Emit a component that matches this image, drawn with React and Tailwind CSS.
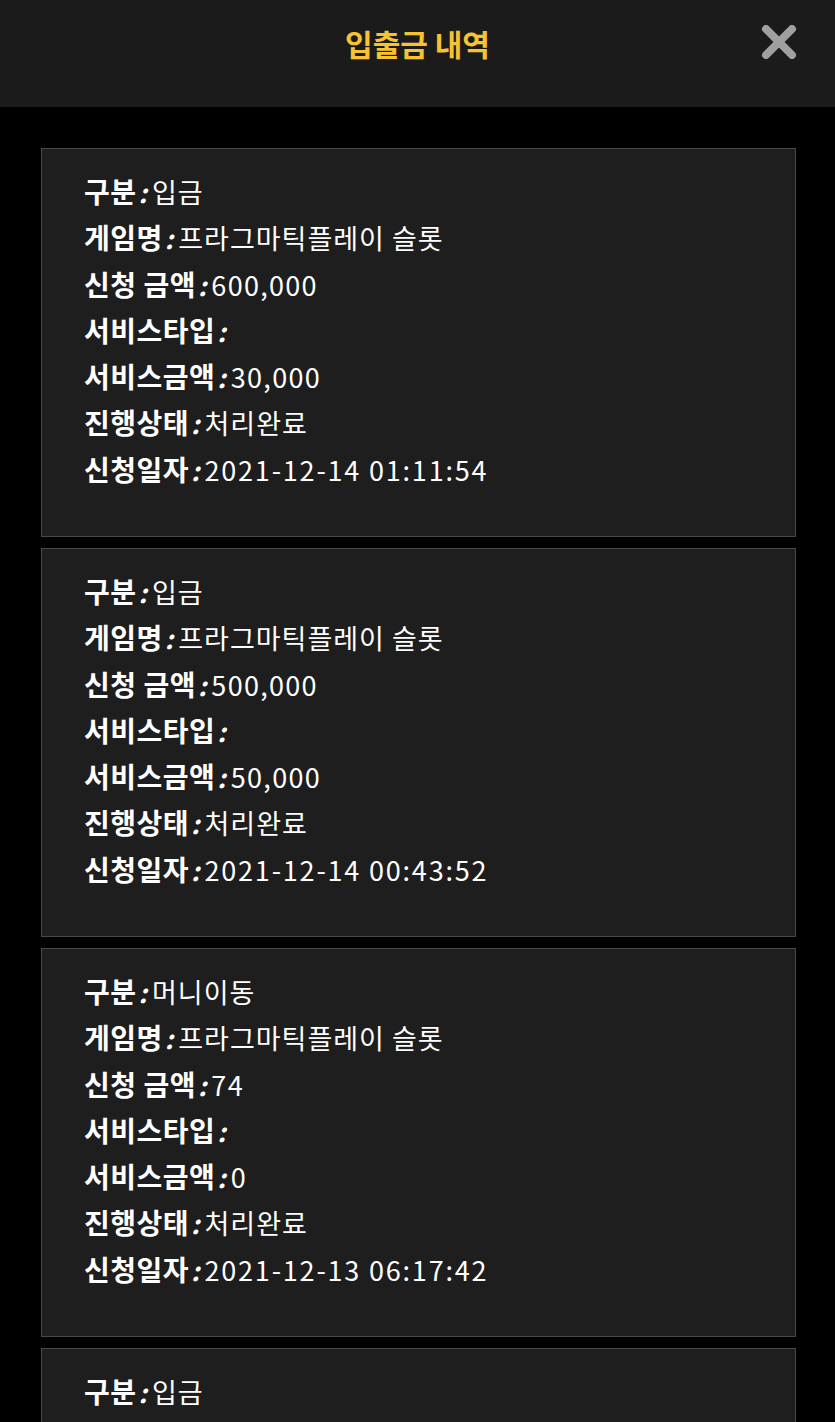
import React from "react";

const items = [
  { type: "입금", game: "프라그마틱플레이 슬롯", amount: "600,000", svc: "30,000", status: "처리완료", date: "2021-12-14 01:11:54" },
  { type: "입금", game: "프라그마틱플레이 슬롯", amount: "500,000", svc: "50,000", status: "처리완료", date: "2021-12-14 00:43:52" },
  { type: "머니이동", game: "프라그마틱플레이 슬롯", amount: "74", svc: "0", status: "처리완료", date: "2021-12-13 06:17:42" },
  { type: "입금", game: "프라그마틱플레이 슬롯", amount: "400,000", svc: "20,000", status: "처리완료", date: "2021-12-12 21:10:05" },
];

function Row({ label, value, vclass }) {
  return (
    <div className="h-[46.3px] leading-[46.3px] whitespace-nowrap text-[27px]">
      <span className="font-bold text-[28px] tracking-[0.5px] leading-none">{label}</span>
      <span className="font-bold italic text-[26px] ml-[2px] leading-none">:</span>
      <span className={"ml-[5px] font-normal leading-none " + vclass}>{value}</span>
    </div>
  );
}

export default function App() {
  return (
    <div
      className="w-[835px] h-[1422px] overflow-hidden bg-black text-white"
      style={{ fontFamily: '"Noto Sans CJK KR", "Noto Sans", sans-serif' }}
    >
      <div className="h-[107px] bg-[#1b1b1b] relative flex items-center justify-center">
        <h1 className="text-[30px] font-bold text-[#f7c331] leading-none -mt-[22px]">입출금 내역</h1>
        <svg className="absolute right-[38px] top-[25px]" width="36" height="34" viewBox="0 0 36 34">
          <path d="M5 4 L31 30 M31 4 L5 30" stroke="#a0a0a0" strokeWidth="8" strokeLinecap="round" />
        </svg>
      </div>
      <div className="pl-[41px] pr-[39px] pt-[41px] flex flex-col gap-[11px]">
        {items.map((it, i) => (
          <div
            key={i}
            className="h-[389px] shrink-0 bg-[#1e1e1e] border border-[#4a4a4a] pl-[42px] pt-[20px]"
          >
            <Row label="구분" value={it.type} vclass="tracking-[1px]" />
            <Row label="게임명" value={it.game} vclass="tracking-[1px]" />
            <Row label="신청 금액" value={it.amount} vclass="tracking-[1.3px]" />
            <Row label="서비스타입" value="" vclass="" />
            <Row label="서비스금액" value={it.svc} vclass="tracking-[1.3px]" />
            <Row label="진행상태" value={it.status} vclass="tracking-[1px]" />
            <Row label="신청일자" value={it.date} vclass="tracking-[1.8px]" />
          </div>
        ))}
      </div>
    </div>
  );
}
